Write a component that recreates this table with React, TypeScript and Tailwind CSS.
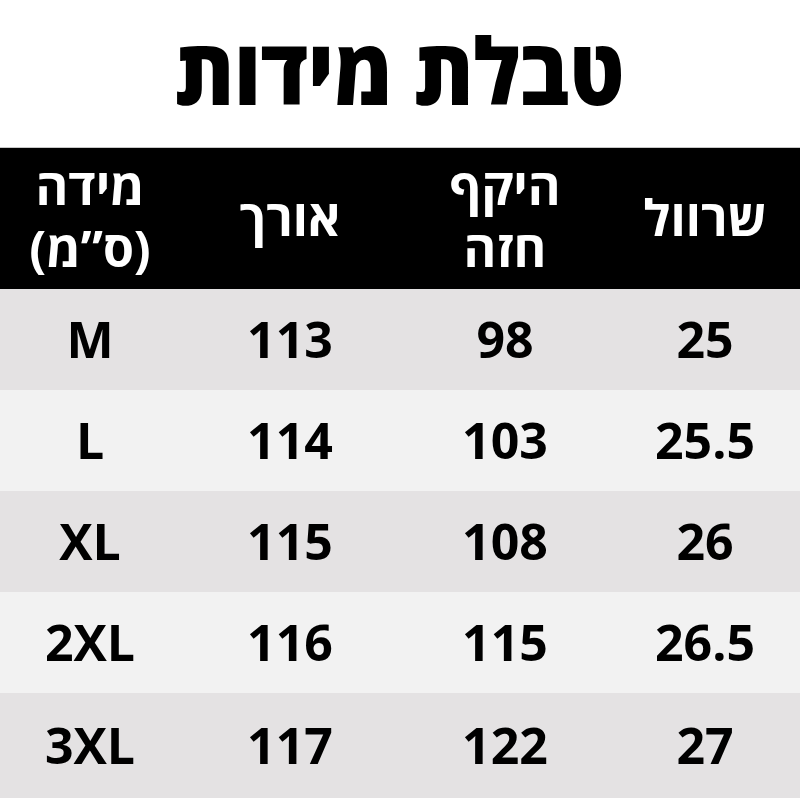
const rows = [
  ["M", "113", "98", "25"],
  ["L", "114", "103", "25.5"],
  ["XL", "115", "108", "26"],
  ["2XL", "116", "115", "26.5"],
  ["3XL", "117", "122", "27"],
];

const font = { fontFamily: '"Open Sans", "DejaVu Sans", sans-serif' };

export default function App() {
  return (
    <div className="w-[800px] h-[800px] bg-white overflow-hidden" style={font}>
      <div className="h-[148px] flex items-center justify-center border-b border-[#c8c8c8]">
        <h1
          dir="rtl"
          className="text-[92px] font-extrabold leading-none text-black pb-2 scale-x-[0.915]"
        >
          טבלת מידות
        </h1>
      </div>

      <div className="grid grid-cols-[180px_220px_210px_190px] h-[141px] bg-black text-white font-bold items-center text-center text-[50px]">
        <div dir="rtl" className="leading-[62px] pb-1">
          מידה
          <br />
          (ס”מ)
        </div>
        <div dir="rtl" className="leading-[62px] pb-1">
          אורך
        </div>
        <div dir="rtl" className="leading-[62px] pb-1">
          היקף
          <br />
          חזה
        </div>
        <div dir="rtl" className="leading-[62px] pb-1">
          שרוול
        </div>
      </div>

      {rows.map((r, i) => (
        <div
          key={r[0]}
          className={
            "grid grid-cols-[180px_220px_210px_190px] items-center text-center text-[50px] font-bold text-black " +
            (i % 2 === 0 ? "bg-[#e4e2e3] " : "bg-[#f2f2f2] ") +
            (i === 4 ? "h-[105px]" : "h-[101px]")
          }
        >
          {r.map((c) => (
            <div key={c}>{c}</div>
          ))}
        </div>
      ))}
    </div>
  );
}
